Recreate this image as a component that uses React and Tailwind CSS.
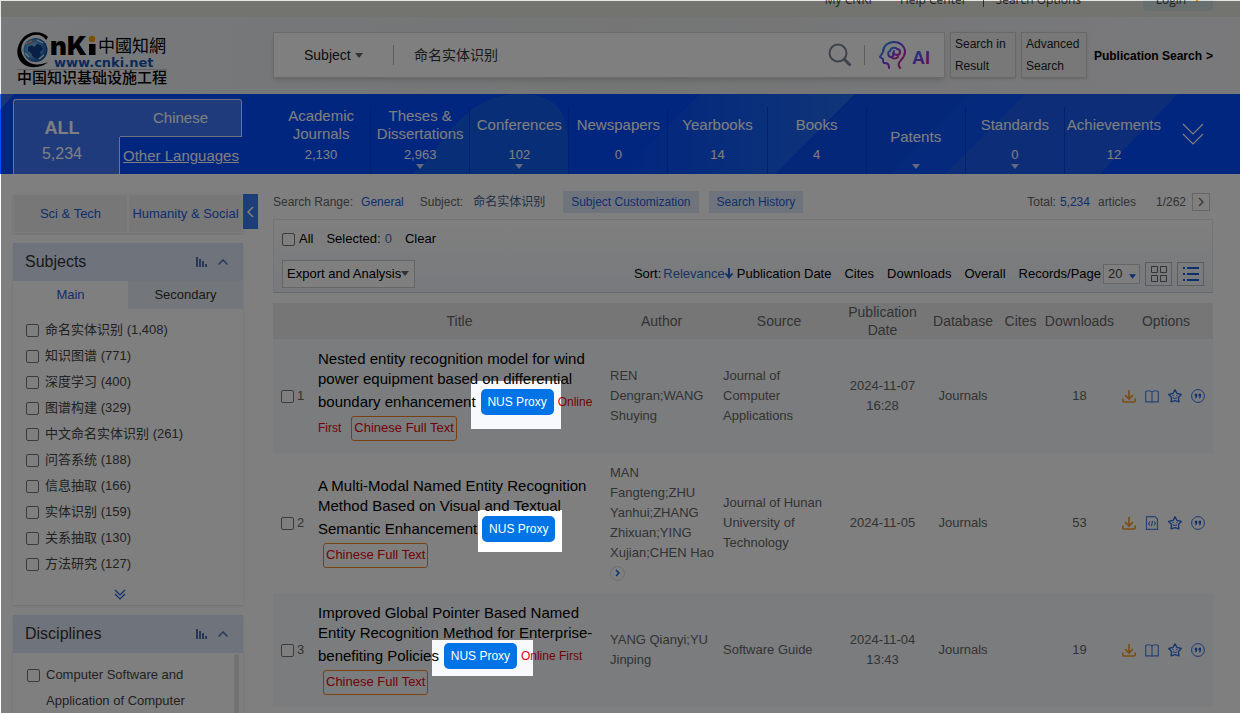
import React from "react";

const categories = [
  { lines: ["Academic", "Journals"], count: "2,130" },
  { lines: ["Theses &", "Dissertations"], count: "2,963", more: true },
  { lines: ["Conferences"], count: "102", more: true },
  { lines: ["Newspapers"], count: "0" },
  { lines: ["Yearbooks"], count: "14" },
  { lines: ["Books"], count: "4" },
  { lines: ["Patents"], more: true },
  { lines: ["Standards"], count: "0", more: true },
  { lines: ["Achievements"], count: "12" },
];

const subjects = [
  ["命名实体识别", "1,408"],
  ["知识图谱", "771"],
  ["深度学习", "400"],
  ["图谱构建", "329"],
  ["中文命名实体识别", "261"],
  ["问答系统", "188"],
  ["信息抽取", "166"],
  ["实体识别", "159"],
  ["关系抽取", "130"],
  ["方法研究", "127"],
];

const records = [
  {
    title: ["Nested entity recognition model for wind", "power equipment based on differential"],
    last: "boundary enhancement",
    online: "Online",
    onlineNext: "First",
    author: "REN Dengran;WANG Shuying",
    source: "Journal of Computer Applications",
    date: ["2024-11-07", "16:28"],
    downloads: 18,
    reader: "book",
  },
  {
    title: ["A Multi-Modal Named Entity Recognition", "Method Based on Visual and Textual"],
    last: "Semantic Enhancement",
    author: "MAN Fangteng;ZHU Yanhui;ZHANG Zhixuan;YING Xujian;CHEN Hao",
    moreAuthors: true,
    source: "Journal of Hunan University of Technology",
    date: ["2024-11-05"],
    downloads: 53,
    reader: "html",
  },
  {
    title: ["Improved Global Pointer Based Named", "Entity Recognition Method for Enterprise-"],
    last: "benefiting Policies",
    online: "Online First",
    author: "YANG Qianyi;YU Jinping",
    source: "Software Guide",
    date: ["2024-11-04", "13:43"],
    downloads: 19,
    reader: "book",
  },
];

// Areas left bright by the dimming layer: x, y, width, height.
const spotlights = [
  [470, 380, 90, 48],
  [477, 509, 84, 42],
  [431, 639, 101, 36],
];

function Spotlight() {
  const holes = spotlights.map(([x, y, w, h]) => `M${x} ${y}h${w}v${h}h-${w}z`).join("");
  return (
    <div
      className="pointer-events-none fixed top-px left-px h-full w-full bg-black/50"
      style={{ clipPath: `path(evenodd, "M0 0H9999V9999H0Z${holes}")` }}
    />
  );
}

function Check({ label, id }) {
  return (
    <input
      id={id}
      type="checkbox"
      aria-label={label}
      className="size-[13px] shrink-0 appearance-none rounded-[2px] border border-[#767676] bg-white"
    />
  );
}

function Caret({ className }) {
  return (
    <svg viewBox="0 0 8 5" className={className} fill="currentColor" aria-hidden="true">
      <path d="M0 0h8L4 5z" />
    </svg>
  );
}

function DoubleChevron({ className, gap = 4, stroke = 1.2 }) {
  return (
    <svg viewBox="0 0 12 12" className={className} fill="none" stroke="currentColor" strokeWidth={stroke} aria-hidden="true">
      <path d={`M1 1l5 5 5-5M1 ${1 + gap}l5 5 5-5`} />
    </svg>
  );
}

function Logo() {
  return (
    <a href="#home" aria-label="CNKI" className="block">
      <svg viewBox="0 0 152 54" className="h-[54px] w-[152px]">
        <defs>
          <radialGradient id="globe" cx="0.4" cy="0.45" r="0.6">
            <stop offset="0" stopColor="#9fd4f5" />
            <stop offset="0.6" stopColor="#3f8fd0" />
            <stop offset="1" stopColor="#174a96" />
          </radialGradient>
        </defs>
        <circle cx="18.500" cy="18" r="12" fill="url(#globe)" />
        <path d="M11 15l4-2 2 2 3-3 4 1 2 4-3 3 1 4-4 3-4-2-2-4-3-2z" fill="#123f8c" />
        <path d="M9 12l6-3M20 8l6 3M8 21l4 4M22 27l5-4" stroke="#d8efff" strokeWidth="1.200" />
        <path d="M10 12l7-3" stroke="#e2574c" strokeWidth="1.200" />
        <path
          d="M31 5C26-1 13-2 6 6C-3 16-1 30 10 34C18 37 27 34 31 30C24 33 15 34 9 28C1 20 4 9 12 5C19 1 26 3 29 8Z"
          fill="#000"
        />
        <text x="33" y="23" fontFamily="Inter, sans-serif" fontWeight="900" fontSize="26" fill="#000">nK</text>
        <circle cx="75" cy="7" r="3.200" fill="#f7a000" />
        <path d="M72 12h6.500v11h-6.500z" fill="#000" />
        <text x="81" y="20" fontFamily="'Noto Sans CJK TC', sans-serif" fontSize="17" fill="#000">中國知網</text>
        <text x="37" y="35" fontFamily="'DejaVu Sans', sans-serif" fontWeight="700" fontSize="13" fill="#1257b0">
          www.cnki.net
        </text>
        <path d="M0 37.500h150" stroke="#c5c5c5" />
        <text x="0" y="51" fontFamily="'Noto Sans CJK SC', sans-serif" fontWeight="500" fontSize="15" fill="#000">
          中国知识基础设施工程
        </text>
      </svg>
    </a>
  );
}

function AiLogo() {
  return (
    <svg viewBox="0 0 52 28" className="h-7 w-[52px]" fill="none" strokeLinecap="round" strokeLinejoin="round">
      <defs>
        <linearGradient id="ai" x1="0" y1="0" x2="1" y2="1">
          <stop offset="0" stopColor="#12a5f5" />
          <stop offset="0.5" stopColor="#7d3cf0" />
          <stop offset="1" stopColor="#ee1677" />
        </linearGradient>
      </defs>
      <g stroke="url(#ai)" strokeWidth="2">
        <path d="M10 27c0-4-1-5-5-5-1 0-1-1-1-4l-3-2 3-5C4 5 9 1 15 1c7 0 11 5 11 10 0 6-5 8-6 11-1 2 0 3 1 5" />
        <path d="M12 16c-3 0-4-5-1-6 1-4 6-4 7-2 4 0 4 6 0 6-3 0-4-2-3-4M12 16c2 0 3-2 2-4M12 16c2 2 5 2 7 0" />
      </g>
      <text x="33" y="23" fontFamily="'Liberation Sans', sans-serif" fontWeight="700" fontSize="18" fill="url(#ai)">AI</text>
    </svg>
  );
}

function PanelHead({ title }) {
  return (
    <div className="flex h-[38px] items-center bg-[#dfe7f8] pr-[15px] pl-3 text-[#333]">
      <h2 className="flex-1 text-base">{title}</h2>
      <button aria-label={`${title} chart`} className="mr-2.5 text-[#5470ae]">
        <svg viewBox="0 0 12 10" className="h-2.5 w-3" fill="currentColor">
          <path d="M0 0h2v10H0zM3 2h2v8H3zM6 4h2v6H6zM9 7h2v3H9z" />
        </svg>
      </button>
      <button aria-label={`Collapse ${title}`} className="text-[#5470ae]">
        <svg viewBox="0 0 10 6" className="h-1.5 w-2.5" fill="none" stroke="currentColor" strokeWidth="1.500">
          <path d="M0.500 5.500L5 1l4.500 4.500" />
        </svg>
      </button>
    </div>
  );
}

function DownloadIcon() {
  return (
    <svg viewBox="0 0 14 14" className="h-3.5 w-3.5" fill="none" stroke="#f59a1c" strokeWidth="1.600">
      <path d="M7 1v9M3 6l4 4 4-4M0.800 9.500v2.500q0 1 1 1h10.400q1 0 1-1v-2.500" />
    </svg>
  );
}

function BookIcon() {
  return (
    <svg viewBox="0 0 14 14" className="h-3.5 w-3.5" fill="none" stroke="#4f86ea" strokeWidth="1.200">
      <path d="M7 3C5.500 1.500 2.500 1.500 0.700 2.500v10.300h5L7 13.300l1.300-.5h5V2.500C11.500 1.500 8.500 1.500 7 3zM7 3v10" />
    </svg>
  );
}

function HtmlIcon() {
  return (
    <svg viewBox="0 0 14 14" className="h-3.5 w-3.5" fill="none" stroke="#4f86ea" strokeWidth="1.200">
      <path d="M1.500 0.700h8.500l2.500 2.500v10.100h-11zM5 5.500L3.500 7.500 5 9.500M9 5.500l1.500 2L9 9.500M7.600 5l-1.200 5" />
    </svg>
  );
}

function StarIcon() {
  return (
    <svg viewBox="0 0 14 14" className="h-3.5 w-3.5" fill="none" stroke="#2f6de0" strokeWidth="1.400" strokeLinejoin="round">
      <path d="M7 0.800l2 3.700 4.300.9-2.900 3.100.5 4.400L7 11.600l-3.900 1.300.5-4.400L0.700 5.400l4.300-.9z" />
      <path d="M5.200 6v1.200M8.800 6v1.200M5 8.800q2 1.400 4 0" strokeWidth="1" />
    </svg>
  );
}

function QuoteIcon() {
  return (
    <svg viewBox="0 0 14 14" className="h-3.5 w-3.5" fill="none" stroke="#2f6de0">
      <circle cx="7" cy="7" r="6.400" />
      <path
        d="M3.800 4.800h2.400v2.400q0 1.700-1.800 2.200l-.3-.7q.8-.3.900-1.300H3.800zM7.600 4.800H10v2.400q0 1.700-1.800 2.200l-.3-.7q.8-.3.900-1.300H7.600z"
        fill="#1f5fd8"
        stroke="none"
      />
    </svg>
  );
}

function Header() {
  return (
    <header>
      <div className="-mt-[17px] flex h-[34px] items-center justify-end bg-[#e6e6df] pr-[27px] font-['Open_Sans',sans-serif] text-xs text-[#444]">
        <a href="#my" className="mr-7">My CNKI</a>
        <a href="#help" className="mr-4">Help Center</a>
        <span className="mr-3 h-3.5 w-px bg-[#555]" />
        <a href="#options">Search Options</a>
        <button className="ml-[62px] flex h-[22px] w-[70px] items-center justify-center gap-2 rounded-sm bg-[#cfe0dd]">
          Login
          <Caret className="h-1 w-1.5 text-[#f28a00]" />
        </button>
      </div>
      <div className="flex h-[77px] items-start bg-linear-to-r from-[#eff2f5] via-[#eaebec] to-[#f2f3f7] pt-[15px] pr-[27px] pl-[17px]">
        <div className="w-[256px] shrink-0">
          <Logo />
        </div>
        <form className="flex h-[46px] flex-1 items-center border border-[#d5d5d5] bg-white shadow-md">
          <button type="button" className="flex w-[120px] items-center gap-1 border-r border-[#bbb] pl-[30px] text-sm text-[#222]">
            Subject
            <Caret className="h-[5px] w-2 text-[#666]" />
          </button>
          <input
            aria-label="Search query"
            defaultValue="命名实体识别"
            className="min-w-0 flex-1 bg-transparent pl-5 text-sm text-[#333] outline-none"
          />
          <button type="button" aria-label="Search" className="mr-3 text-[#7b8496]">
            <svg viewBox="0 0 24 24" className="size-6" fill="none" stroke="currentColor" strokeWidth="2">
              <circle cx="10" cy="10" r="8.500" />
              <path d="M16 16l6.500 6.500" strokeWidth="3" />
            </svg>
          </button>
          <span className="mr-3.5 h-5 w-px bg-[#bbb]" />
          <button type="button" aria-label="AI search" className="mr-[13px]">
            <AiLogo />
          </button>
        </form>
        <button className="ml-[5px] h-[46px] w-[66px] border border-[#d0d0d0] bg-[#f0f0f0] pl-1 text-left text-xs leading-[22px] text-[#222] shadow-sm">
          Search in Result
        </button>
        <button className="ml-[5px] h-[46px] w-[66px] border border-[#d0d0d0] bg-[#f0f0f0] pl-1 text-left text-xs leading-[22px] text-[#222] shadow-sm">
          Advanced Search
        </button>
        <a href="#publication" className="ml-[7px] flex h-12 items-center gap-1 text-xs font-bold whitespace-nowrap text-black">
          <span>Publication Search</span>
          <span>&gt;</span>
        </a>
      </div>
    </header>
  );
}

function CategoryNav() {
  return (
    <nav className="relative flex h-20 bg-[#024cff] pr-[27px] pl-[13px] text-white">
      <svg viewBox="0 0 1240 80" preserveAspectRatio="none" className="absolute inset-0 h-full w-full" aria-hidden="true">
        <defs>
          <linearGradient id="sheen" x1="1" y1="0" x2="0" y2="0">
            <stop offset="0" stopColor="#2f78e8" stopOpacity="0.7" />
            <stop offset="1" stopColor="#2f78e8" stopOpacity="0" />
          </linearGradient>
        </defs>
        <path d="M855 0L775 80H620L700 0z" fill="url(#sheen)" />
        <path d="M970 0L890 80H775L855 0z" fill="#1152e8" opacity="0.5" />
        <path d="M1025 0L945 80H890L970 0z" fill="#1a5cf0" opacity="0.4" />
        <path d="M1178 0L1100 80H945L1025 0z" fill="#2460ee" opacity="0.75" />
        <path d="M412 80C440 60 460 0 518 0S568 40 568 80z" fill="#1761ee" opacity="0.8" />
        <path d="M0 16L14 0H0z" fill="#2f6cf5" />
      </svg>
      <div className="relative flex w-[229px] pt-[5px]">
        <a href="#all" className="flex w-[107px] flex-col items-center rounded-tl-[3px] border-t border-l border-[#dfe6ff] bg-[#4076f8] pt-4 pr-2.5">
          <span className="text-lg leading-6 font-bold">ALL</span>
          <span className="mt-1 text-base leading-5">5,234</span>
        </a>
        <div className="flex flex-1 flex-col text-[15px]">
          <a href="#chinese" className="flex h-[38px] items-center justify-center rounded-tr-[3px] border-t border-r border-b border-[#dfe6ff] bg-[#4076f8]">
            Chinese
          </a>
          <a href="#other" className="-ml-px flex flex-1 items-center justify-center border-l border-[#dfe6ff] bg-[#024cff] pt-0.5 underline">
            Other Languages
          </a>
        </div>
      </div>
      <ul className="relative ml-[30px] flex flex-1 pt-[13px]">
        {categories.map((c) => (
          <li key={c.lines[0]} className="flex-1 border-r border-[#0340dc] last:border-0">
            <a href="#category" className="flex flex-col items-center">
              <span className={c.count ? "flex h-9 flex-col justify-center text-center text-[15px] leading-[18px]" : "flex h-[57px] flex-col justify-center pt-1 text-[15px]"}>
                {c.lines.map((l) => (
                  <span key={l}>{l}</span>
                ))}
              </span>
              {c.count && <span className="mt-[3px] text-[13px] leading-[18px]">{c.count}</span>}
              {c.more && <Caret className="h-[5px] w-2 text-[#c9d6ff]" />}
            </a>
          </li>
        ))}
      </ul>
      <button aria-label="More databases" className="relative w-[50px] pl-[18px]">
        <DoubleChevron className="size-6" gap={5} stroke={0.6} />
      </button>
    </nav>
  );
}

function Sidebar() {
  return (
    <aside className="w-[230px] shrink-0 pt-5">
      <div className="flex h-[39px] gap-0.5 bg-[#fafafa] p-px text-[13px] text-[#1b5fdc] shadow">
        <button className="flex-1 bg-[#eeeeee]">Sci &amp; Tech</button>
        <button className="flex-1 bg-[#eeeeee] whitespace-nowrap">Humanity &amp; Social</button>
      </div>
      <section className="mt-2.5 bg-white shadow">
        <PanelHead title="Subjects" />
        <div className="flex h-7 text-[13px]">
          <button className="flex-1 text-[#1b5fdc]">Main</button>
          <button className="flex-1 bg-[#e6ecf6] text-[#333]">Secondary</button>
        </div>
        <ul className="pt-2 pl-[13px]">
          {subjects.map(([name, n], i) => (
            <li key={name} className="flex h-[26px] items-center gap-[6px] text-[13px] text-[#444]">
              <Check id={`s${i}`} label={name} />
              <label htmlFor={`s${i}`}>
                {name} ({n})
              </label>
            </li>
          ))}
        </ul>
        <button aria-label="More subjects" className="flex h-7 w-full items-center justify-center pt-2 pr-4 text-[#1b5fdc]">
          <DoubleChevron className="size-3" />
        </button>
      </section>
      <section className="mt-2.5 bg-white shadow">
        <PanelHead title="Disciplines" />
        <div className="mx-px flex">
          <div className="flex flex-1 items-start gap-[6px] py-[9px] pl-[13px] text-[13px] leading-[26px] text-[#444]">
            <span className="flex h-[26px] items-center">
              <Check id="d0" label="Computer Software and Application of Computer" />
            </span>
            <label htmlFor="d0" className="w-[150px]">
              Computer Software and Application of Computer
            </label>
          </div>
          <div className="mt-px mr-[3px] w-[5px] rounded-full bg-[#e4e4e4]" />
        </div>
      </section>
    </aside>
  );
}

function Toolbar() {
  return (
    <>
      <div className="flex h-[22px] items-center text-xs text-[#666]">
        <span>Search Range:</span>
        <a href="#general" className="ml-2 text-[#1b5fdc]">General</a>
        <span className="ml-4">Subject:</span>
        <span className="ml-2.5 text-[#3f5d8c]">命名实体识别</span>
        <button className="ml-[18px] h-[22px] bg-[#dfe7f8] px-2 text-[#1b5fdc]">Subject Customization</button>
        <button className="ml-2.5 h-[22px] bg-[#dfe7f8] px-2 text-[#1b5fdc]">Search History</button>
        <span className="ml-auto">Total:</span>
        <span className="ml-1 text-[#1b5fdc]">5,234</span>
        <span className="ml-2">articles</span>
        <span className="mr-1.5 ml-5">1/262</span>
        <button aria-label="Next page" className="mr-[3px] flex size-[18px] items-center justify-center border border-[#ccc] text-[#777]">
          <svg viewBox="0 0 6 10" className="h-2.5 w-1.5" fill="none" stroke="currentColor" strokeWidth="1.500">
            <path d="M1 1l4 4-4 4" />
          </svg>
        </button>
      </div>
      <div className="mt-1.5 border border-[#e6e8ec] border-b-[#cdd3df] bg-linear-to-b from-white to-[#f0f3f9] px-2 pb-[3px] text-[13px] text-black">
        <div className="flex h-[38px] items-center">
          <Check id="all" label="Select all" />
          <label htmlFor="all" className="ml-1">All</label>
          <span className="ml-[13px]">Selected:</span>
          <span className="ml-1 text-[#3f6bc0]">0</span>
          <button className="ml-[13px]">Clear</button>
        </div>
        <div className="flex h-[31px] items-center">
          <button className="flex h-7 w-[133px] items-center border border-[#ccc] bg-white pl-1">
            Export and Analysis
            <Caret className="h-[5px] w-2 text-[#666]" />
          </button>
          <span className="ml-auto">Sort:</span>
          <button className="ml-0.5 flex items-center text-[#2f66c8]">
            Relevance
            <svg viewBox="0 0 8 11" className="h-[11px] w-2" fill="currentColor" aria-hidden="true">
              <path d="M3 0h2v6.500L7.200 4.800 8 6.200 4 11 0 6.200l.8-1.400L3 6.500z" />
            </svg>
          </button>
          <button className="ml-1">Publication Date</button>
          <button className="ml-[13px]">Cites</button>
          <button className="ml-[13px]">Downloads</button>
          <button className="ml-[13px]">Overall</button>
          <label htmlFor="per-page" className="ml-[13px]">Records/Page</label>
          <span className="relative ml-0.5">
            <select id="per-page" className="h-5 w-[37px] appearance-none border border-[#ccc] bg-white pl-1 text-[13px] leading-4 text-[#444]">
              <option>20</option>
            </select>
            <Caret className="pointer-events-none absolute top-2.5 right-1 h-[5px] w-[7px] text-[#1b5fdc]" />
          </span>
          <button aria-label="Grid view" className="ml-[5px] flex h-6 w-[27px] items-center justify-center border border-[#bbb]">
            <svg viewBox="0 0 16 16" className="size-4" fill="none" stroke="#666">
              <path d="M0.500 0.500h6v6h-6zM9.500 0.500h6v6h-6zM0.500 9.500h6v6h-6zM9.500 9.500h6v6h-6z" />
            </svg>
          </button>
          <button aria-label="List view" className="ml-[5px] flex h-6 w-[27px] items-center justify-center border border-[#bbb]">
            <svg viewBox="0 0 16 14" className="h-3.5 w-4" stroke="#1b5fdc" strokeWidth="2">
              <path d="M0 1h2M4 1h12M0 7h2M4 7h12M0 13h2M4 13h12" />
            </svg>
          </button>
        </div>
      </div>
    </>
  );
}

function FullText({ className }) {
  return (
    <a href="#fulltext" className={`flex h-[25px] items-center rounded-[3px] border border-[#f58220] px-0.5 text-[13px] text-[#e60012] ${className}`}>
      Chinese Full Text
    </a>
  );
}

function Results() {
  return (
    <table className="mt-2.5 w-full table-fixed text-[13px] leading-5 text-[#666]">
      <colgroup>
        <col className="w-[45px]" />
        <col />
        <col className="w-[113px]" />
        <col className="w-[122px]" />
        <col className="w-[85px]" />
        <col className="w-[76px]" />
        <col className="w-[39px]" />
        <col className="w-[79px]" />
        <col className="w-[94px]" />
      </colgroup>
      <thead className="bg-[#ededed] text-sm leading-[18px]">
        <tr className="h-9 [&>th]:p-0 [&>th]:text-center [&>th]:font-normal">
          <th aria-label="Number" />
          <th><span className="mr-1">Title</span></th>
          <th>Author</th>
          <th>Source</th>
          <th>Publication Date</th>
          <th>Database</th>
          <th>Cites</th>
          <th>Downloads</th>
          <th>Options</th>
        </tr>
      </thead>
      <tbody>
        {records.map((r, i) => (
          <tr key={r.last} className="odd:bg-[#f7f9fc] even:bg-white">
            <td className="pl-2">
              <span className="flex items-center gap-[3px]">
                <Check id={`r${i}`} label={`Record ${i + 1}`} />
                <label htmlFor={`r${i}`}>{i + 1}</label>
              </span>
            </td>
            <td className="pt-2.5 pb-[11px] whitespace-nowrap">
              <a href="#record" className="block text-[15px] text-black">
                {r.title.map((t) => (
                  <span key={t} className="block">{t}</span>
                ))}
              </a>
              <div className="flex h-[25px] items-center">
                <a href="#record" className="text-[15px] text-black">{r.last}</a>
                <button className="ml-[5px] h-[26px] w-[73px] shrink-0 rounded-[5px] bg-[#0073e6] text-xs text-white">
                  NUS Proxy
                </button>
                {r.online && <span className="ml-1 text-xs text-[#e60012]">{r.online}</span>}
              </div>
              <div className="flex h-7 items-center">
                {r.onlineNext && <span className="text-xs text-[#e60012]">{r.onlineNext}</span>}
                <FullText className={r.onlineNext ? "ml-2.5" : "ml-[5px]"} />
              </div>
            </td>
            <td className="py-2.5 pl-[5px]">
              {r.author}
              {r.moreAuthors && (
                <span className="flex h-5 items-center">
                  <button aria-label="More authors" className="flex size-[15px] items-center justify-center rounded-full border border-[#d5dbe5] text-[#1b5fdc]">
                    <svg viewBox="0 0 5 8" className="h-2 w-[5px]" fill="none" stroke="currentColor" strokeWidth="1.500">
                      <path d="M1 1l3 3-3 3" />
                    </svg>
                  </button>
                </span>
              )}
            </td>
            <td className="pr-2 pl-[5px]">{r.source}</td>
            <td className="text-center">
              {r.date.map((d) => (
                <span key={d} className="block">{d}</span>
              ))}
            </td>
            <td className="text-center">Journals</td>
            <td />
            <td className="text-center">{r.downloads}</td>
            <td>
              <div className="flex items-center gap-[9px] pl-[3px]">
                <button aria-label="Download"><DownloadIcon /></button>
                <button aria-label="Read online">{r.reader === "book" ? <BookIcon /> : <HtmlIcon />}</button>
                <button aria-label="Favourite"><StarIcon /></button>
                <button aria-label="Cite"><QuoteIcon /></button>
              </div>
            </td>
          </tr>
        ))}
      </tbody>
    </table>
  );
}

export default function App() {
  return (
    <div className="h-screen overflow-hidden bg-white font-['Liberation_Sans','Noto_Sans_CJK_SC',sans-serif]">
      <Header />
      <CategoryNav />
      <div className="flex items-start pr-[27px] pl-[13px]">
        <Sidebar />
        <button aria-label="Collapse sidebar" className="mt-5 flex h-[35px] w-[15px] shrink-0 items-center justify-center bg-[#3b7bf0] text-white">
          <svg viewBox="0 0 7 12" className="h-3 w-[7px]" fill="none" stroke="currentColor" strokeWidth="1.500">
            <path d="M6 1L1 6l5 5" />
          </svg>
        </button>
        <main className="ml-[15px] min-w-0 flex-1 pt-[17px]">
          <Toolbar />
          <Results />
        </main>
      </div>
      <Spotlight />
    </div>
  );
}
